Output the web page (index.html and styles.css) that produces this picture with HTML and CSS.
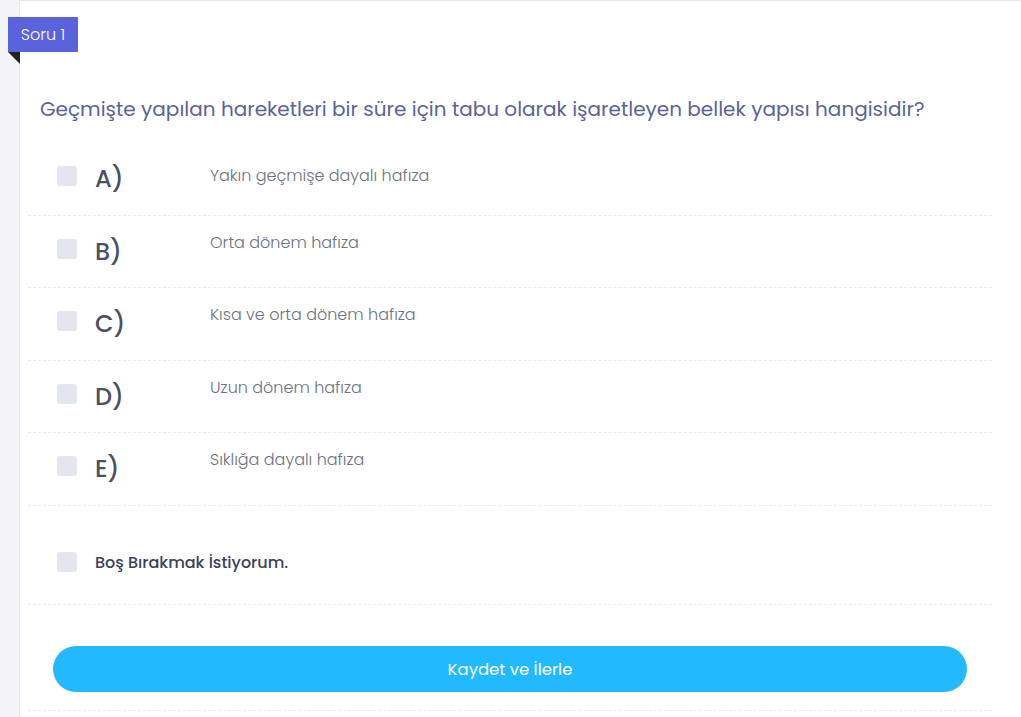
FILE: index.html
```html
<!DOCTYPE html>
<html lang="tr">
<head>
<meta charset="utf-8">
<title>Soru 1</title>
<link rel="stylesheet" href="styles.css">
</head>
<body>
<div class="page">
  <div class="card">
    <div class="ribbon">Soru 1</div>
    <h2 class="question">Geçmişte yapılan hareketleri bir süre için tabu olarak işaretleyen bellek yapısı hangisidir?</h2>
    <ul class="options">
      <li class="option"><span class="box"></span><span class="letter">A)</span><span class="text">Yakın geçmişe dayalı hafıza</span></li>
      <li class="option"><span class="box"></span><span class="letter">B)</span><span class="text">Orta dönem hafıza</span></li>
      <li class="option"><span class="box"></span><span class="letter">C)</span><span class="text">Kısa ve orta dönem hafıza</span></li>
      <li class="option"><span class="box"></span><span class="letter">D)</span><span class="text">Uzun dönem hafıza</span></li>
      <li class="option"><span class="box"></span><span class="letter">E)</span><span class="text">Sıklığa dayalı hafıza</span></li>
    </ul>
    <div class="blank"><span class="box"></span><span class="blank-text">Boş Bırakmak İstiyorum.</span></div>
    <div class="actions"><button class="submit">Kaydet ve İlerle</button></div>
  </div>
</div>
</body>
</html>
```
FILE: styles.css
```css
html, body {
  margin: 0;
  padding: 0;
}
body {
  background: #f4f4f8;
  font-family: "Poppins", "Open Sans", "Noto Sans", sans-serif;
}
.page {
  padding-left: 19px;
}
.card {
  position: relative;
  background: #fff;
  border-left: 1px solid #e6e6ee;
  border-top: 1px solid #e6e6ee;
  min-height: 716px;
  padding: 0 29px 0 8px;
}
.ribbon {
  position: absolute;
  left: -12px;
  top: 16px;
  width: 70px;
  height: 35px;
  background: #5a63dc;
  color: #fff;
  font-size: 16px;
  font-weight: 300;
  line-height: 35px;
  text-align: center;
}
.ribbon::after {
  content: "";
  position: absolute;
  left: 0;
  top: 35px;
  border-top: 12px solid #222;
  border-left: 12px solid transparent;
}
.question {
  margin: 0;
  padding: 94px 0 0 12px;
  font-size: 20px;
  font-weight: 400;
  line-height: 28px;
  color: #5c6394;
}
.options {
  list-style: none;
  margin: 0;
  padding: 21px 0 0;
}
.option {
  display: flex;
  align-items: flex-start;
  height: 72px;
  box-sizing: border-box;
  border-bottom: 1px dashed #ebebef;
  padding: 23px 0 0 29px;
}
.option:first-child {
  padding-top: 22px;
}
.option:nth-child(3), .option:nth-child(4) {
  height: 72.5px;
}
.option:nth-child(5) {
  height: 73px;
}
.box {
  flex: none;
  width: 20px;
  height: 20px;
  border-radius: 3px;
  background: #e3e6ee;
}
.letter {
  width: 115px;
  margin-left: 18px;
  font-size: 24px;
  font-weight: 500;
  line-height: 20px;
  color: #4b5064;
  padding-top: 3px;
}
.text {
  font-size: 16px;
  font-weight: 300;
  color: #6d7282;
  line-height: 20px;
  margin-top: -6px;
}
.option:first-child .text {
  margin-top: 0;
}
.blank {
  display: flex;
  align-items: center;
  height: 99px;
  box-sizing: border-box;
  border-bottom: 1px dashed #ebebef;
  padding: 14px 0 0 29px;
}
.blank-text {
  margin-left: 18px;
  font-size: 16px;
  font-weight: 500;
  color: #3c4158;
}
.actions {
  height: 106px;
  box-sizing: border-box;
  border-bottom: 1px dashed #ebebef;
  padding: 41px 25px 0 25px;
}
.submit {
  display: block;
  width: 100%;
  height: 46px;
  border: 0;
  border-radius: 23px;
  background: #22b9ff;
  color: #fff;
  font-family: inherit;
  font-size: 16.5px;
  font-weight: 400;
  cursor: pointer;
}
```
